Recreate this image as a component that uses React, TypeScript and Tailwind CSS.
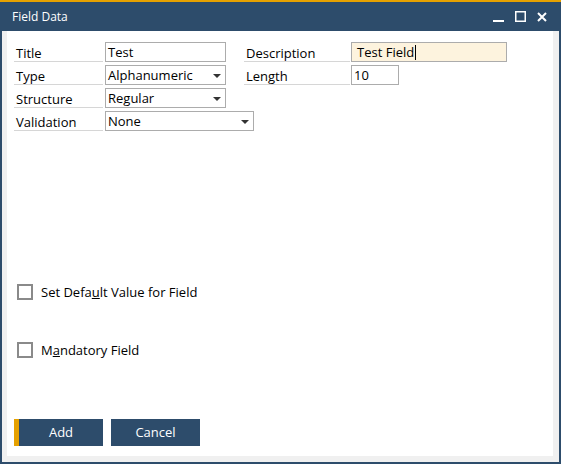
import React from "react";

const font = { fontFamily: '"Open Sans", "Noto Sans", sans-serif' };

function Label({ text, w }: { text: string; w: string }) {
  return (
    <div className={`${w} h-[20px] border-b border-[#d6d6d6] flex items-center pl-[2px] pt-[3px] text-[13px] text-black leading-none`}>
      {text}
    </div>
  );
}

function Arrow() {
  return (
    <svg width="8" height="4" viewBox="0 0 8 4" className="shrink-0">
      <path d="M0 0 H8 L4 4 Z" fill="#333" />
    </svg>
  );
}

function Select({ value, w }: { value: string; w: string }) {
  return (
    <div className={`${w} h-[20px] border border-[#acacac] bg-white flex items-center pl-[2px] pr-[4px] pt-[1px] text-[13px] text-black leading-none`}>
      <span className="flex-1">{value}</span>
      <Arrow />
    </div>
  );
}

function Check({ children }: { children: React.ReactNode }) {
  return (
    <div className="flex items-center h-[16px]">
      <div className="w-[16px] h-[16px] border-2 border-[#8a8a8a] bg-white ml-[3px]" />
      <div className="ml-[8px] text-[13px] text-black leading-none">{children}</div>
    </div>
  );
}

export default function App() {
  return (
    <div className="w-[561px] h-[464px] flex flex-col bg-white" style={font}>
      <div className="h-[2px] bg-[#e6a100]" />
      <div className="h-[29px] bg-[#2d4c6b] flex items-center pl-[12px] pr-[14px] shrink-0">
        <span className="text-white text-[12px] leading-none flex-1">Field Data</span>
        <div className="flex items-center gap-[11px]">
          <svg width="11" height="11" viewBox="0 0 11 11">
            <rect x="0" y="9" width="11" height="2" fill="#fff" />
          </svg>
          <svg width="11" height="11" viewBox="0 0 11 11">
            <rect x="0.75" y="0.75" width="9.5" height="9.5" fill="none" stroke="#fff" strokeWidth="1.5" />
          </svg>
          <svg width="10" height="10" viewBox="0 0 10 10">
            <path d="M1 1 L9 9 M9 1 L1 9" stroke="#fff" strokeWidth="2" />
          </svg>
        </div>
      </div>
      <div className="flex-1 flex flex-col border-x-2 border-b-2 border-[#2d4c6b] bg-[#f0f0f0] pl-[5px] pr-[6px] pb-[6px]">
        <div className="flex-1 bg-white flex flex-col pl-[7px] pt-[11px]">
          <div className="flex flex-col gap-[3px]">
            <div className="flex items-start">
              <Label text="Title" w="w-[89px]" />
              <div className="ml-[2px] w-[121px] h-[20px] border border-[#acacac] flex items-center pl-[2px] pt-[1px] text-[13px] leading-none text-black">Test</div>
              <div className="ml-[18px]">
                <Label text="Description" w="w-[106px]" />
              </div>
              <div className="ml-[1px] w-[156px] h-[20px] border border-[#acacac] bg-[#fdf3de] flex items-center pl-[5px] pt-[1px] text-[13px] leading-none text-black">
                Test Field<span className="inline-block w-[1px] h-[15px] bg-black ml-[1px]" />
              </div>
            </div>
            <div className="flex items-start">
              <Label text="Type" w="w-[89px]" />
              <div className="ml-[2px]">
                <Select value="Alphanumeric" w="w-[121px]" />
              </div>
              <div className="ml-[18px]">
                <Label text="Length" w="w-[106px]" />
              </div>
              <div className="ml-[1px] w-[48px] h-[20px] border border-[#acacac] flex items-center pl-[2px] pt-[1px] text-[13px] leading-none text-black">10</div>
            </div>
            <div className="flex items-start">
              <Label text="Structure" w="w-[89px]" />
              <div className="ml-[2px]">
                <Select value="Regular" w="w-[121px]" />
              </div>
            </div>
            <div className="flex items-start">
              <Label text="Validation" w="w-[89px]" />
              <div className="ml-[2px]">
                <Select value="None" w="w-[149px]" />
              </div>
            </div>
          </div>
          <div className="mt-[153px]">
            <Check>
              Set Defa<span className="underline">u</span>lt Value for Field
            </Check>
          </div>
          <div className="mt-[42px]">
            <Check>
              M<span className="underline">a</span>ndatory Field
            </Check>
          </div>
          <div className="mt-[61px] flex gap-[8px]">
            <div className="w-[89px] h-[27px] bg-[#2d4c6b] border-l-[5px] border-[#e6a100] flex items-center justify-center text-white text-[13px] leading-none">
              Add
            </div>
            <div className="w-[89px] h-[27px] bg-[#2d4c6b] flex items-center justify-center text-white text-[13px] leading-none">
              Cancel
            </div>
          </div>
        </div>
      </div>
    </div>
  );
}
